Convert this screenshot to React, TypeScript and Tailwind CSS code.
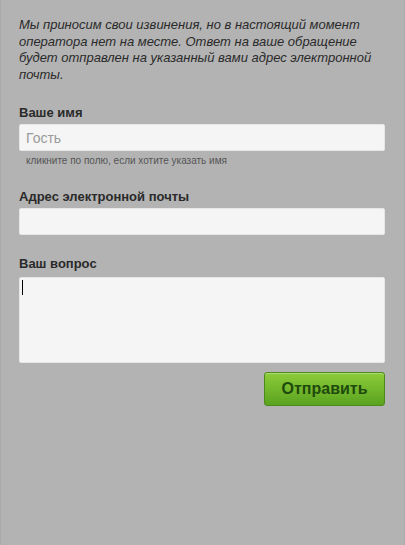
import React from "react";

export default function App() {
  return (
    <div
      className="w-[405px] h-[545px] bg-[#b3b3b3] border-x border-[#a9a9a9] px-[18px] pt-[17px] text-[#222]"
      style={{ fontFamily: '"Liberation Sans", Arial, sans-serif' }}
    >
      <p className="italic text-[13px] leading-[16.5px] text-[#2a2a2a] pr-[10px]">
        Мы приносим свои извинения, но в настоящий момент оператора нет на месте. Ответ на ваше обращение будет отправлен на указанный вами адрес электронной почты.
      </p>

      <div className="mt-[22px]">
        <label className="block font-bold text-[13px] leading-[15px] text-[#2a2a2a]">Ваше имя</label>
        <input
          className="mt-[4px] block w-[366px] h-[27px] bg-[#f5f5f5] rounded-[2px] border border-[#e6e6e6] px-[6px] text-[14px] text-[#333] placeholder:text-[#9a9a9a] outline-none"
          placeholder="Гость"
        />
        <div className="mt-[4px] pl-[7px] text-[10px] leading-[12px] text-[#555]">
          кликните по полю, если хотите указать имя
        </div>
      </div>

      <div className="mt-[22px]">
        <label className="block font-bold text-[13px] leading-[15px] text-[#2a2a2a]">Адрес электронной почты</label>
        <input className="mt-[4px] block w-[366px] h-[27px] bg-[#f5f5f5] rounded-[2px] border border-[#e6e6e6] px-[7px] text-[14px] text-[#333] outline-none" />
      </div>

      <div className="mt-[21px]">
        <label className="block font-bold text-[13px] leading-[15px] text-[#2a2a2a]">Ваш вопрос</label>
        <div className="mt-[6px] relative w-[366px] h-[86px] bg-[#f5f5f5] rounded-[2px] border border-[#e6e6e6]">
          <span className="absolute left-[2px] top-[2px] w-px h-[15px] bg-black" />
        </div>
      </div>

      <div className="mt-[9px] flex justify-end w-[366px]">
        <button className="w-[121px] h-[34px] rounded-[3px] border border-[#4d8a1c] bg-gradient-to-b from-[#8dcc3a] to-[#5aa31f] text-[16px] font-bold text-[#1e4a0c] shadow-[inset_0_1px_0_rgba(255,255,255,0.3)]">
          Отправить
        </button>
      </div>
    </div>
  );
}
